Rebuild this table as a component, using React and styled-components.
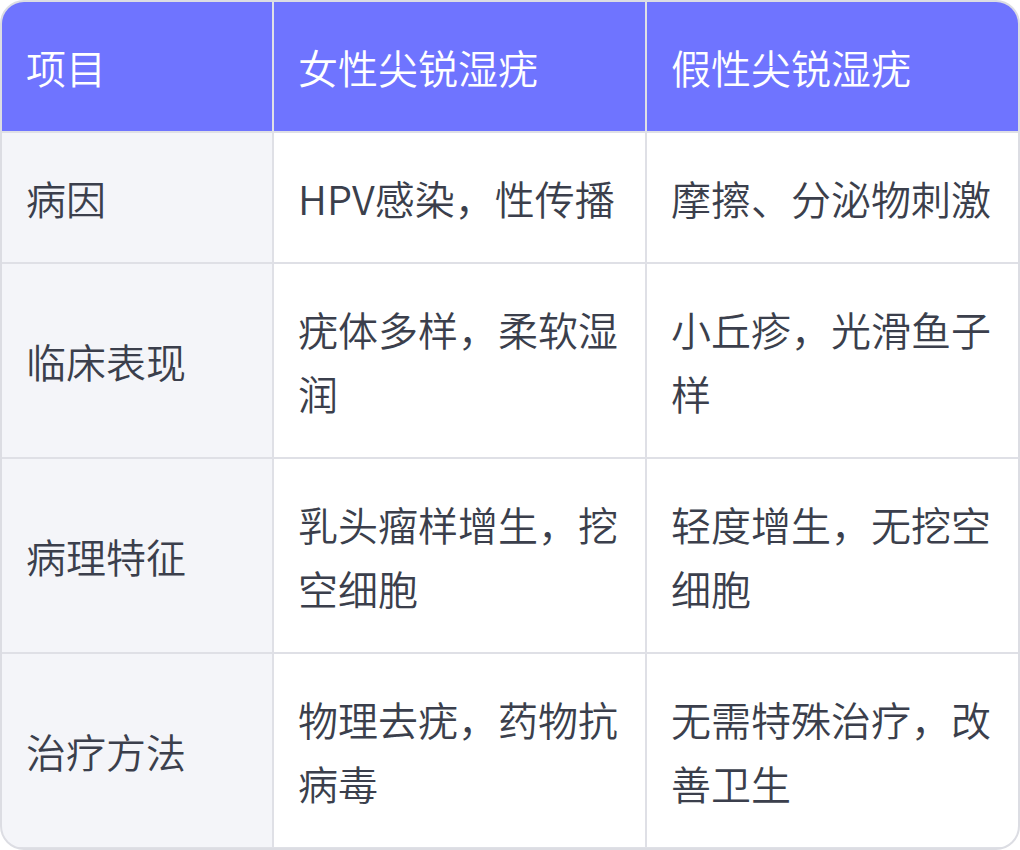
import React from "react";
import styled, { createGlobalStyle } from "styled-components";

const Global = createGlobalStyle`
  html, body { margin: 0; padding: 0; background: #ffffff; }
  body { font-family: "Noto Sans CJK SC DemiLight", "Noto Sans CJK SC Light", "Noto Sans CJK SC", "Noto Sans", sans-serif; }
`;

const Frame = styled.div`
  box-sizing: border-box;
  width: 1020px;
  height: 850px;
  border: 2px solid #dcdde3;
  border-radius: 24px;
  overflow: hidden;
  background: #dfe0e6;
`;

const Grid = styled.div`
  display: grid;
  grid-template-columns: 270px 1fr 1fr;
  gap: 2px;
  background: #dfe0e6;
`;

const Cell = styled.div`
  box-sizing: border-box;
  padding: 33px 24px 32px;
  font-size: 40px;
  line-height: 64px;
  font-weight: 300;
  letter-spacing: 0;
  color: ${(p) => (p.$head ? "#ffffff" : "#3b3f4c")};
  background: ${(p) => (p.$head ? "#6f74ff" : p.$label ? "#f4f5f9" : "#ffffff")};
  display: flex;
  align-items: center;
  word-break: break-all;
`;

const head = ["项目", "女性尖锐湿疣", "假性尖锐湿疣"];
const rows = [
  ["病因", "HPV感染，性传播", "摩擦、分泌物刺激"],
  ["临床表现", "疣体多样，柔软湿润", "小丘疹，光滑鱼子样"],
  ["病理特征", "乳头瘤样增生，挖空细胞", "轻度增生，无挖空细胞"],
  ["治疗方法", "物理去疣，药物抗病毒", "无需特殊治疗，改善卫生"],
];

export default function App() {
  return (
    <>
      <Global />
      <Frame>
        <Grid>
          {head.map((h) => (
            <Cell key={h} $head>
              {h}
            </Cell>
          ))}
          {rows.map((r) =>
            r.map((c, i) => (
              <Cell key={r[0] + i} $label={i === 0}>
                {c}
              </Cell>
            ))
          )}
        </Grid>
      </Frame>
    </>
  );
}
